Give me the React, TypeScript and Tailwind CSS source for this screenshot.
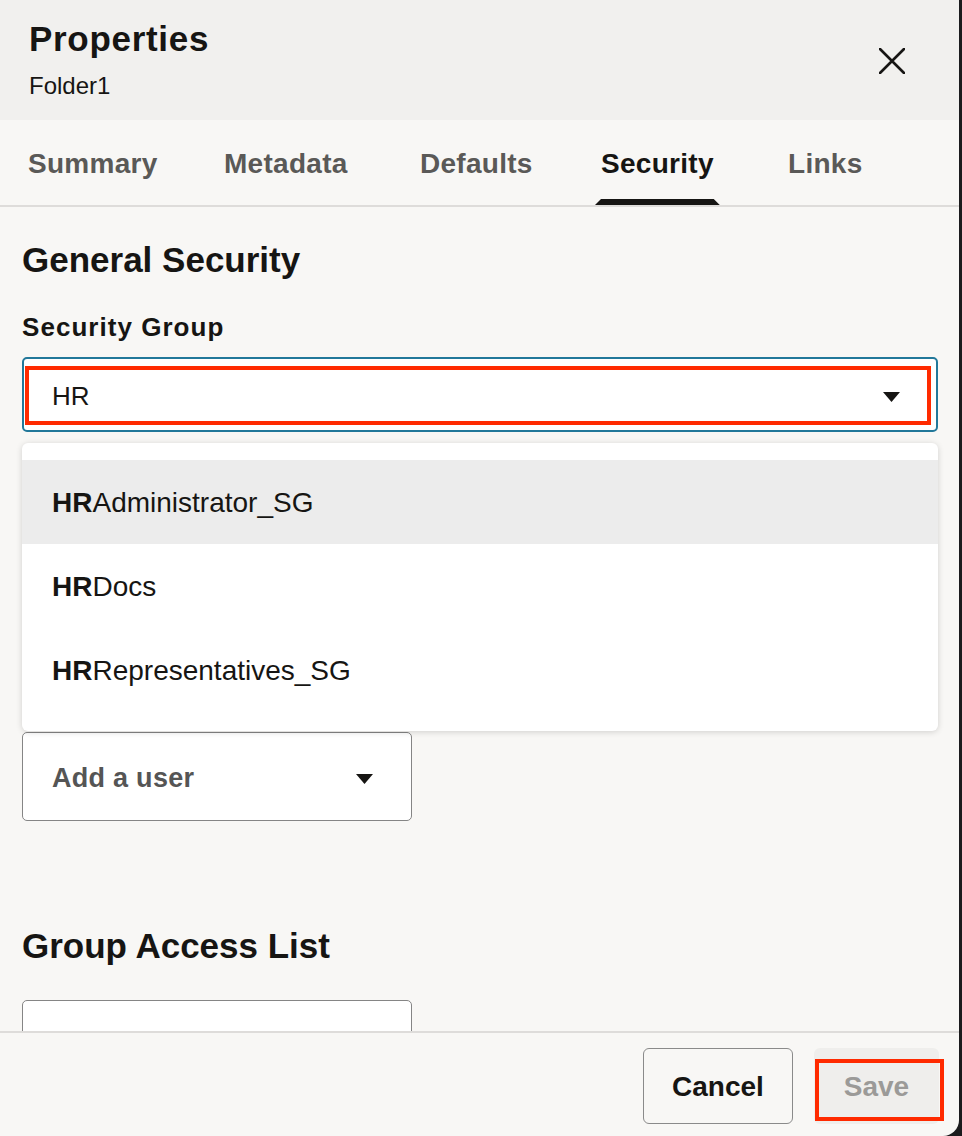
import React from "react";

const tabs = [
  { label: "Summary", w: "w-[196px]" },
  { label: "Metadata", w: "w-[196px]" },
  { label: "Defaults", w: "w-[181px]" },
  { label: "Security", w: "w-[187px]" },
  { label: "Links", w: "w-[120px]" },
];
const groups = ["Administrator_SG", "Docs", "Representatives_SG"];

function Caret() {
  return (
    <svg width="17" height="10" viewBox="0 0 17 10">
      <path d="M0 0h17L8.5 10z" fill="#161513" />
    </svg>
  );
}

export default function App() {
  return (
    <div className="w-[962px] h-[1136px] bg-[#1b1b1d] font-['Liberation_Sans',Arial,sans-serif] text-[#161513]">
      <div className="w-[959px] h-full bg-[#f8f7f5] rounded-br-[16px] overflow-hidden flex flex-col">
        {/* header */}
        <div className="h-[120px] shrink-0 bg-[#f1f0ee] pl-[29px] pr-[47px] flex items-start justify-between">
          <div className="pt-[19px]">
            <h1 className="text-[35px] leading-[40px] font-bold tracking-[0.02em]">Properties</h1>
            <p className="mt-[13px] text-[24px] leading-[28px]">Folder1</p>
          </div>
          <button className="mt-[41px] w-[40px] h-[40px] flex items-center justify-center">
            <svg width="26" height="26" viewBox="0 0 26 26">
              <path d="M1 1L25 25M25 1L1 25" stroke="#161513" strokeWidth="2.6" strokeLinecap="round" />
            </svg>
          </button>
        </div>

        {/* tabs */}
        <div className="h-[87px] shrink-0 border-b-2 border-[#dedcda] pl-[28px] pt-[3px] flex">
          {tabs.map((t) => (
            <div key={t.label} className={"h-full flex " + t.w}>
              <span
                className={
                  "relative h-full flex items-center text-[28px] font-bold tracking-[0.01em] " +
                  (t.label === "Security" ? "text-[#161513]" : "text-[#5a5957]")
                }
              >
                {t.label}
                {t.label === "Security" && (
                  <span className="absolute bottom-0 left-[-6px] right-[-6px] h-[6px] bg-[#161513] [clip-path:polygon(6px_0,calc(100%-6px)_0,100%_100%,0_100%)]" />
                )}
              </span>
            </div>
          ))}
        </div>

        {/* content */}
        <div className="flex-1 min-h-0 overflow-hidden px-[22px] pt-[33px]">
          <h2 className="text-[35px] leading-[40px] font-bold">General Security</h2>
          <label className="block mt-[32px] text-[26px] leading-[30px] font-bold tracking-[0.04em]">
            Security Group
          </label>

          <div className="relative mt-[15px] w-[916px]">
            <div className="h-[75px] bg-white border-2 border-[#22789a] rounded-[5px] pl-[28px] pr-[36px] pt-[4px] flex items-center justify-between">
              <span className="text-[26px]">HR</span>
              <Caret />
            </div>
            <div className="absolute left-[3px] top-[9px] w-[906px] h-[59px] border-[4px] border-[#ff2a00]" />

            {/* dropdown list */}
            <div className="absolute z-10 left-0 top-full mt-[11px] w-full bg-white rounded-[6px] shadow-[0_1px_6px_rgba(0,0,0,0.16)] pt-[17px] pb-[19px]">
              {groups.map((g, i) => (
                <div
                  key={g}
                  className={"h-[84px] pl-[30px] pt-[2px] flex items-center text-[28px] " + (i === 0 ? "bg-[#ececec]" : "")}
                >
                  <b>HR</b>
                  {g}
                </div>
              ))}
            </div>
          </div>

          <h2 className="mt-[226px] text-[35px] leading-[40px] font-bold">User Access List</h2>
          <div className="mt-[34px] w-[390px] h-[89px] bg-white border-[1.5px] border-[#858585] rounded-[5px] pl-[29px] pr-[38px] pt-[4px] flex items-center justify-between">
            <span className="text-[27px] font-bold text-[#555555] tracking-[0.01em]">Add a user</span>
            <Caret />
          </div>

          <h2 className="mt-[105px] text-[35px] leading-[40px] font-bold">Group Access List</h2>
          <div className="mt-[34px] w-[390px] h-[89px] bg-white border-[1.5px] border-[#858585] rounded-[5px]" />
        </div>

        {/* footer */}
        <div className="h-[105px] shrink-0 border-t-2 border-[#dedcda] pr-[20px] pt-[2px] flex items-center justify-end gap-[21px]">
          <button className="w-[150px] h-[76px] pt-[3px] border border-[#8a8a8a] rounded-[6px] text-[28px] font-bold text-[#161513]">
            Cancel
          </button>
          <div className="relative">
            <button className="w-[125px] h-[76px] pt-[3px] bg-[#efeeec] rounded-[6px] text-[28px] font-bold text-[#9b9a98]">
              Save
            </button>
            <div className="absolute left-[1px] top-[11px] right-[-5px] bottom-[3px] border-[4px] border-[#ff2a00]" />
          </div>
        </div>
      </div>
    </div>
  );
}
